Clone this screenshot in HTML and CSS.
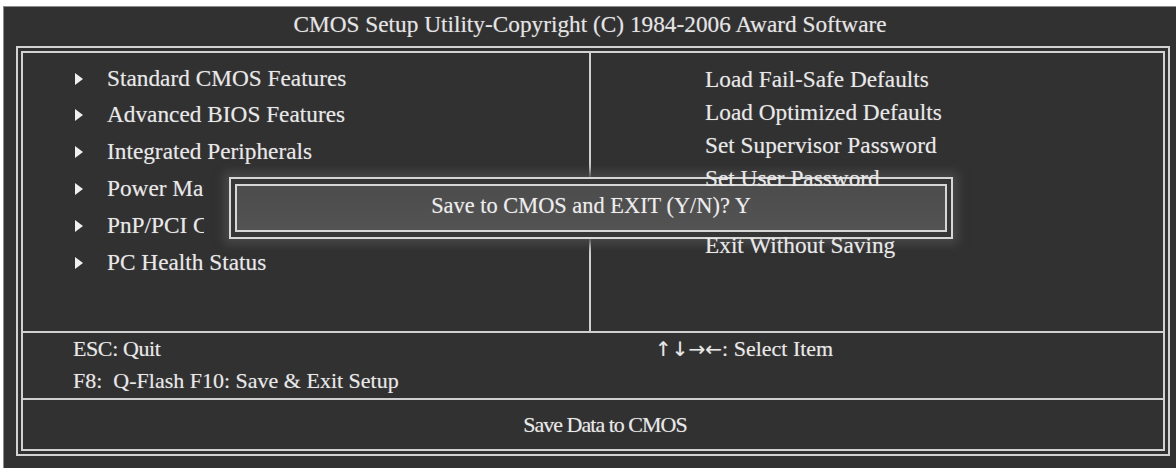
FILE: index.html
```html
<!DOCTYPE html>
<html lang="en">
<head>
<meta charset="utf-8">
<title>CMOS Setup Utility</title>
<link rel="stylesheet" href="styles.css">
</head>
<body>
<div class="screen">
  <header class="title">CMOS Setup Utility-Copyright (C) 1984-2006 Award Software</header>
  <div class="frame">
    <div class="frame-inner">
      <section class="menu">
        <ul class="menu-col menu-left">
          <li><span class="tri"></span>Standard CMOS Features</li>
          <li><span class="tri"></span>Advanced BIOS Features</li>
          <li><span class="tri"></span>Integrated Peripherals</li>
          <li><span class="tri"></span>Power Management Setup</li>
          <li><span class="tri"></span>PnP/PCI Configurations</li>
          <li><span class="tri"></span>PC Health Status</li>
        </ul>
        <ul class="menu-col menu-right">
          <li>Load Fail-Safe Defaults</li>
          <li>Load Optimized Defaults</li>
          <li>Set Supervisor Password</li>
          <li class="over">Set User Password</li>
          <li>Save &amp; Exit Setup</li>
          <li class="over">Exit Without Saving</li>
        </ul>
        <div class="dialog-layer">
          <div class="dialog">
            <div class="dialog-inner">Save to CMOS and EXIT (Y/N)? Y</div>
          </div>
        </div>
      </section>
      <section class="keys">
        <div class="keys-left"><span class="esc">ESC: Quit</span>
F8:  Q-Flash F10: Save &amp; Exit Setup</div>
        <div class="keys-right"><span class="arrows">↑↓→←</span>: Select Item</div>
      </section>
      <footer class="status">Save Data to CMOS</footer>
    </div>
  </div>
</div>
</body>
</html>
```
FILE: styles.css
```css
body {
  margin: 0;
  background: #ffffff;
  font-family: "Liberation Serif", "Times New Roman", serif;
  color: #e8e8e8;
}

.screen {
  margin: 6px 0 0 3px;
  height: 462px;
  box-sizing: border-box;
  background: #313131;
  border-top: 1px solid #8c8c8c;
  border-left: 1px solid #8c8c8c;
  padding: 0 6px 0 12px;
  text-shadow: 0 0 1px rgba(255, 255, 255, 0.35);
}

.title {
  height: 39px;
  box-sizing: border-box;
  padding: 0 6px 4px 0;
  line-height: 35px;
  text-align: center;
  font-size: 23.3px;
  color: #e4e4e4;
}

.frame {
  height: 410px;
  box-sizing: border-box;
  border: 2px solid #d2d2d2;
  padding: 3px;
}

.frame-inner {
  height: 100%;
  box-sizing: border-box;
  border: 2px solid #d2d2d2;
  display: flex;
  flex-direction: column;
}

/* main menu: two columns split by a single rule */
.menu {
  position: relative;
  height: 278px;
  flex: none;
  display: grid;
  grid-template-columns: 566px 1fr;
}

.menu-col {
  margin: 0;
  list-style: none;
  font-size: 23.3px;
}

.menu-left {
  padding: 6.7px 0 0 52px;
  line-height: 36.8px;
}

.menu-right {
  border-left: 2px solid #cfcfcf;
  padding: 9.5px 0 0 114px;
  line-height: 33.2px;
}

.tri {
  display: inline-block;
  width: 0;
  height: 0;
  border-left: 8px solid #f0f0f0;
  border-top: 6.5px solid transparent;
  border-bottom: 6.5px solid transparent;
  margin-right: 24px;
  vertical-align: 1px;
}

.over {
  position: relative;
  z-index: 2;
}

/* confirmation box drawn over the menu; the layer clears the cells beside it */
.dialog-layer {
  position: absolute;
  left: 181px;
  top: 124px;
  padding: 0 24px 0 25px;
  background: #313131;
  z-index: 1;
}

.dialog {
  width: 724px;
  box-sizing: border-box;
  border: 2px solid #d6d6d6;
  padding: 5px 4px;
  background: #363636;
  box-shadow: 0 0 9px 5px #484848;
}

.dialog-inner {
  height: 48px;
  box-sizing: border-box;
  border: 2px solid #d6d6d6;
  background: linear-gradient(#4c4c4c, #535353);
  text-align: center;
  font-size: 22.4px;
  line-height: 39px;
  color: #ededed;
}

/* key help */
.keys {
  height: 67px;
  flex: none;
  box-sizing: border-box;
  border-top: 2px solid #cfcfcf;
  display: grid;
  grid-template-columns: 566px 1fr;
  font-size: 22px;
  line-height: 31.6px;
  white-space: pre;
}

.keys-left {
  padding-left: 50px;
}

.keys-right {
  padding-left: 66px;
}

.arrows {
  font-family: "DejaVu Sans", sans-serif;
  font-size: 20px;
}

.esc {
  letter-spacing: -0.4px;
}

.status {
  flex: 1;
  border-top: 2px solid #cfcfcf;
  display: flex;
  align-items: center;
  justify-content: center;
  padding-left: 24px;
  font-size: 22px;
  letter-spacing: -1px;
}
```
